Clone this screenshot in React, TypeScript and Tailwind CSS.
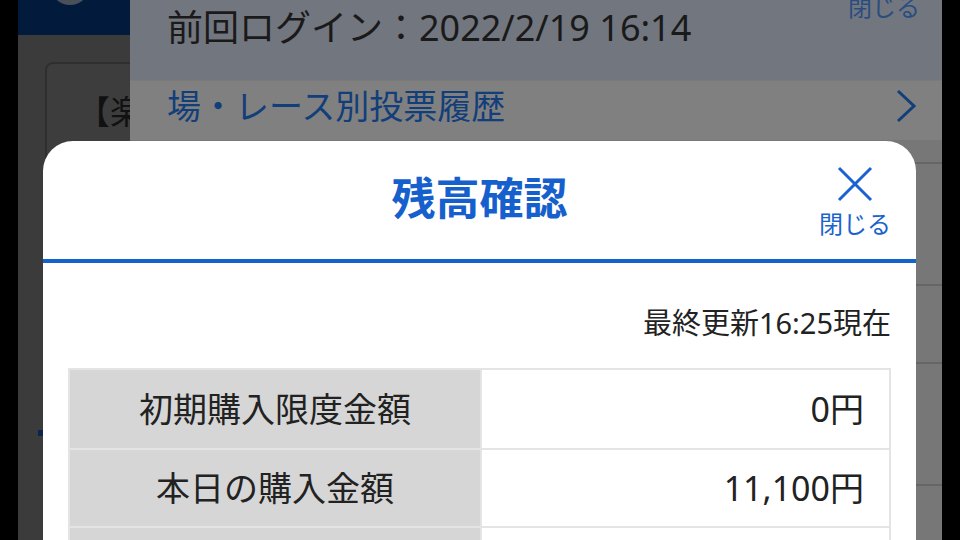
import React from "react";

const font = { fontFamily: '"Noto Sans", "Noto Sans CJK JP", sans-serif' };

const rows = [
  { label: "初期購入限度金額", value: "0円" },
  { label: "本日の購入金額", value: "11,100円" },
  { label: "払戻金額", value: "0円" },
];

function CloseIcon({ className }: { className?: string }) {
  return (
    <svg className={className} viewBox="0 0 36 36" fill="none" stroke="currentColor" strokeWidth={3}>
      <path d="M2 2L34 34M34 2L2 34" />
    </svg>
  );
}

export default function App() {
  return (
    <div className="flex h-[540px] w-[960px] overflow-hidden bg-black" style={font}>
      <div className="w-[18px] shrink-0 bg-black" />
      <div className="relative flex-1 overflow-hidden bg-[#3b3b3b]">
        {/* dimmed page behind */}
        <div className="flex h-[35px] items-end bg-[#021a3c] pl-[32px]">
          <div className="mb-[30px] h-[40px] w-[40px] rounded-full bg-[#4a4f58]" />
        </div>
        <div className="px-[27px] pt-[27px]">
          <div className="h-[380px] rounded-lg border-2 border-[#2f2f2f] bg-[#3d3d3d] pl-[30px] pt-[26px]">
            <div className="w-[55px] overflow-hidden whitespace-nowrap text-[33px] leading-[44px] text-[#111]">
              【楽天競馬】
            </div>
          </div>
        </div>

        {/* drawer panel */}
        <div className="absolute inset-y-0 left-[112px] right-0 flex flex-col bg-[#777]">
          <div className="relative h-[80px] bg-[#72767f] pl-[37px] text-[36px] leading-[56px] text-[#1a1a1a]">
            前回ログイン：2022/2/19 16:14
            <span className="absolute right-[22px] top-[-10px] text-[24px] leading-[34px] text-[#2a4d80]">閉じる</span>
          </div>
          <div className="flex h-[60px] items-center justify-between border-t border-[#7a7a7a] bg-[#808080] pb-[10px] pl-[37px] pr-[25px] text-[34px] text-[#123e7a]">
            <span className="leading-[48px]">場・レース別投票履歴</span>
            <svg className="h-[34px] w-[22px]" viewBox="0 0 22 34" fill="none" stroke="currentColor" strokeWidth={3}>
              <path d="M3 2L19 17L3 32" />
            </svg>
          </div>
          <div className="h-[24px] border-b-2 border-[#666] bg-[#777]" />
          <div className="h-[122px] border-b-2 border-[#666] bg-[#777]" />
          <div className="h-[78px] border-b-2 border-[#666] bg-[#777]" />
          <div className="h-[122px] border-b-2 border-[#666] bg-[#777]" />
          <div className="flex-1 bg-[#777]" />
        </div>

        {/* small accent behind modal */}
        <div className="absolute left-[20px] top-[430px] h-[6px] w-[6px] bg-[#0b2450]" />

        {/* modal */}
        <div className="absolute left-[25px] top-[141px] h-[420px] w-[873px] rounded-t-[30px] bg-white">
          <div className="relative flex h-[122px] items-center justify-center border-b-4 border-[#1462cc]">
            <h1 className="pb-[4px] text-[44px] font-bold leading-[56px] text-[#1560cc]">残高確認</h1>
            <button className="absolute right-[25px] top-[25px] flex flex-col items-center text-[#1a62cf]">
              <CloseIcon className="h-[36px] w-[36px]" />
              <span className="mt-[6px] text-[24px] leading-[32px]">閉じる</span>
            </button>
          </div>
          <div className="px-[25px] pt-[40px]">
            <p className="text-right text-[29px] leading-[40px] text-[#222]">最終更新16:25現在</p>
            <div className="mt-[25px] border-2 border-[#e4e4e4]">
              {rows.map((r, i) => (
                <div key={i} className={`flex h-[78px] ${i > 0 ? "border-t-2 border-[#e4e4e4]" : ""}`}>
                  <div className="flex w-[410px] items-center justify-center bg-[#d6d6d6] text-[34px] text-[#222]">
                    {r.label}
                  </div>
                  <div className="flex flex-1 items-center justify-end border-l-2 border-[#e4e4e4] pr-[25px] text-[34px] text-[#222]">
                    {r.value}
                  </div>
                </div>
              ))}
            </div>
          </div>
        </div>
      </div>
      <div className="w-[18px] shrink-0 bg-black" />
    </div>
  );
}
